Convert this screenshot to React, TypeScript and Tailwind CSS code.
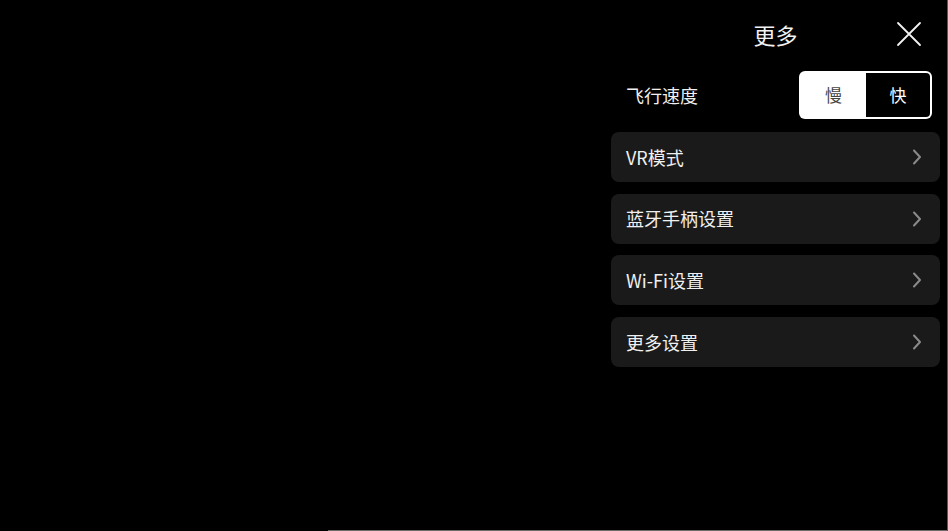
import React from 'react';

const ROWS = ['VR模式', '蓝牙手柄设置', 'Wi-Fi设置', '更多设置'];

const Chevron: React.FC = () => (
  <svg width="10" height="16" viewBox="0 0 10 16" fill="none">
    <path d="M2 1.5 L8 8 L2 14.5" stroke="#8a8a8a" strokeWidth="2" strokeLinecap="round" strokeLinejoin="round" />
  </svg>
);

const CloseIcon: React.FC = () => (
  <svg width="26" height="26" viewBox="0 0 26 26" fill="none">
    <path d="M2 2 L24 24 M24 2 L2 24" stroke="#f2f2f2" strokeWidth="1.8" strokeLinecap="round" />
  </svg>
);

export default function App() {
  return (
    <div
      className="w-[948px] h-[531px] bg-black flex flex-col overflow-hidden border-r border-[#5a5a5a]"
      style={{ fontFamily: '"Noto Sans CJK SC", "Noto Sans", sans-serif' }}
    >
      <div className="flex-1 flex justify-end">
        <div className="w-[329px] mr-[7px] flex flex-col">
          {/* header */}
          <div className="relative h-[68px] flex items-center justify-center">
            <span className="text-[22px] text-[#f2f2f2] leading-none">更多</span>
            <div className="absolute right-[18px] top-[21px]">
              <CloseIcon />
            </div>
          </div>

          {/* flight speed */}
          <div className="mt-[3px] h-[48px] flex items-center justify-between pl-[15px] pr-[8px]">
            <span className="text-[18px] text-[#f0f0f0]">飞行速度</span>
            <div className="w-[133px] h-[48px] bg-white rounded-[6px] p-[2px] flex">
              <div className="flex-1 flex items-center justify-center text-[17px] text-[#444]">慢</div>
              <div className="w-[64px] bg-black rounded-r-[4px] flex items-center justify-center text-[17px] text-white">快</div>
            </div>
          </div>

          {/* setting rows */}
          <div className="mt-[13px] flex flex-col gap-[11.7px]">
            {ROWS.map((label) => (
              <div
                key={label}
                className="h-[50px] bg-[#1a1a1a] rounded-[8px] flex items-center justify-between pl-[15px] pr-[18px]"
              >
                <span className="text-[18px] text-[#f0f0f0]">{label}</span>
                <Chevron />
              </div>
            ))}
          </div>
        </div>
      </div>
      <div className="h-[1px] ml-[328px] bg-[#6a6a6a]" />
    </div>
  );
}
